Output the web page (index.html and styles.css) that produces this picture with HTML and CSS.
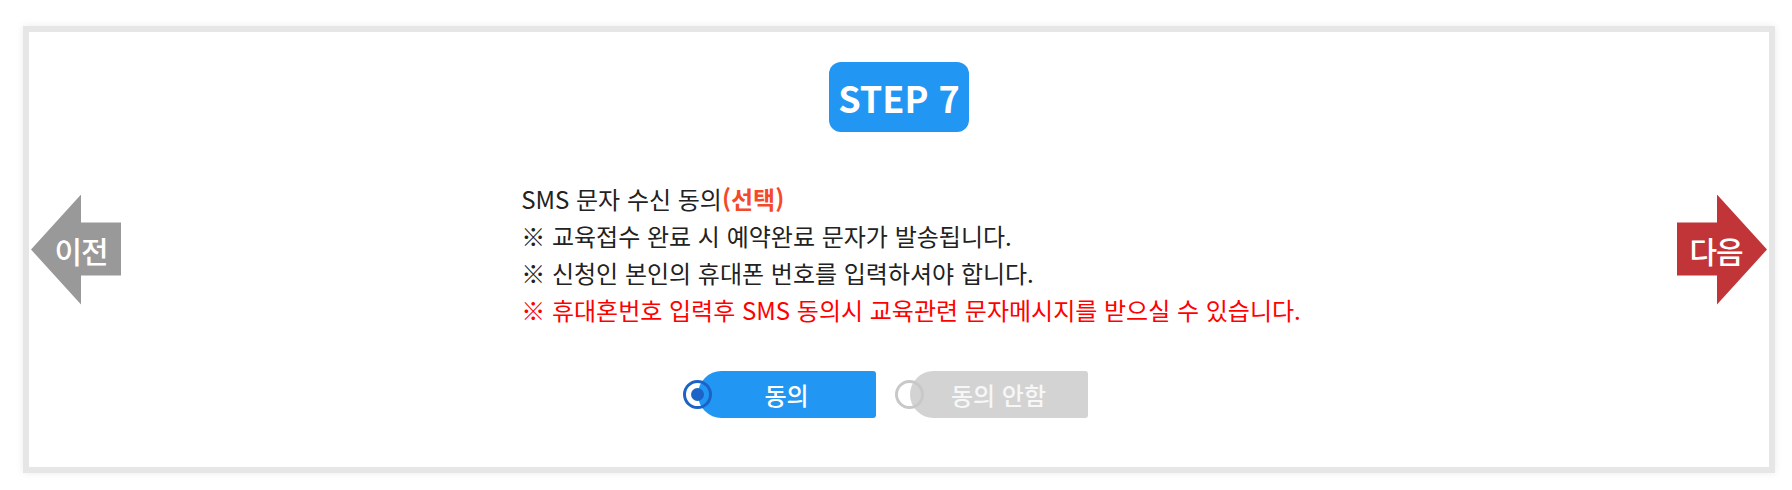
FILE: index.html
```html
<!DOCTYPE html>
<html lang="ko">

<head>
    <meta charset="UTF-8">
    <meta name="viewport" content="width=device-width, initial-scale=1.0">
    <title>교육 신청 - STEP 7</title>
    <link rel="stylesheet" href="styles.css">
</head>

<body>
    <div class="wrap">
        <div class="step-box">
            <a class="nav-arrow prev" href="#">이전</a>

            <div class="step-content">
                <div class="step-badge">STEP 7</div>

                <div class="notice">
                    <p>SMS 문자 수신 동의<strong class="optional">(선택)</strong></p>
                    <p>※ 교육접수 완료 시 예약완료 문자가 발송됩니다.</p>
                    <p>※ 신청인 본인의 휴대폰 번호를 입력하셔야 합니다.</p>
                    <p class="warn">※ 휴대혼번호 입력후 SMS 동의시 교육관련 문자메시지를 받으실 수 있습니다.</p>
                </div>

                <div class="agree-row">
                    <label class="agree-opt on">
                        <span class="radio"></span>
                        <span class="agree-btn">동의</span>
                    </label>
                    <label class="agree-opt off">
                        <span class="radio"></span>
                        <span class="agree-btn">동의 안함</span>
                    </label>
                </div>
            </div>

            <a class="nav-arrow next" href="#">다음</a>
        </div>
    </div>
</body>

</html>
```

FILE: styles.css
```css
* {
    margin: 0;
    padding: 0;
    box-sizing: border-box;
}

body {
    background: #fff;
    font-family: "Noto Sans CJK KR", "Noto Sans", sans-serif;
    color: #222;
}

.wrap {
    padding: 26px 17px 17px 23px;
}

.step-box {
    height: 447px;
    border: 6px solid #e6e6e6;
    box-shadow: 0 0 8px rgba(0, 0, 0, 0.08);
    display: flex;
    align-items: center;
}

/* arrows */
.nav-arrow {
    flex: none;
    width: 90px;
    height: 110px;
    display: flex;
    align-items: center;
    justify-content: center;
    color: #fff;
    font-size: 30px;
    font-weight: 500;
    letter-spacing: -1px;
    text-decoration: none;
}

.nav-arrow.prev {
    margin-left: 2px;
    padding-left: 10px;
    background: #999;
    clip-path: polygon(0 50%, 50px 0, 50px 28px, 90px 28px, 90px 81px, 50px 81px, 50px 110px);
}

.nav-arrow.next {
    margin-right: 2px;
    padding-right: 12px;
    background: #c13538;
    clip-path: polygon(100% 50%, 40px 0, 40px 28px, 0 28px, 0 81px, 40px 81px, 40px 110px);
}

/* center */
.step-content {
    flex: 1;
    align-self: stretch;
    display: flex;
    flex-direction: column;
    align-items: center;
    padding-top: 30px;
}

.step-badge {
    width: 140px;
    height: 70px;
    border-radius: 12px;
    background: #2196f3;
    color: #fff;
    font-size: 36px;
    font-weight: 700;
    display: flex;
    align-items: center;
    justify-content: center;
}

.notice {
    margin-top: 48px;
    padding-left: 24px;
    font-size: 24px;
    line-height: 37px;
}

.optional {
    color: #f4492a;
    font-weight: 700;
}

.warn {
    color: #ff0000;
}

.agree-row {
    margin-top: 43px;
    margin-right: 28px;
    display: flex;
    gap: 19px;
}

.agree-opt {
    display: flex;
    align-items: center;
    cursor: pointer;
}

.agree-btn {
    width: 178px;
    height: 47px;
    margin-left: -14px;
    border-radius: 24px 3px 3px 24px;
    display: flex;
    align-items: center;
    justify-content: center;
    color: #fff;
    font-size: 24px;
    font-weight: 500;
}

.agree-opt.on .agree-btn {
    background: #2196f3;
}

.agree-opt.off .agree-btn {
    background: #d3d3d3;
    color: #f7f7f7;
}

.radio {
    position: relative;
    z-index: 1;
    width: 29px;
    height: 29px;
    border-radius: 50%;
    border: 3px solid #c8c8c8;
}

.agree-opt.on .radio {
    border-color: #1b63c6;
}

.agree-opt.on .radio::after {
    content: '';
    position: absolute;
    left: 5px;
    top: 5px;
    width: 13px;
    height: 13px;
    border-radius: 50%;
    background: #1b63c6;
}
```
